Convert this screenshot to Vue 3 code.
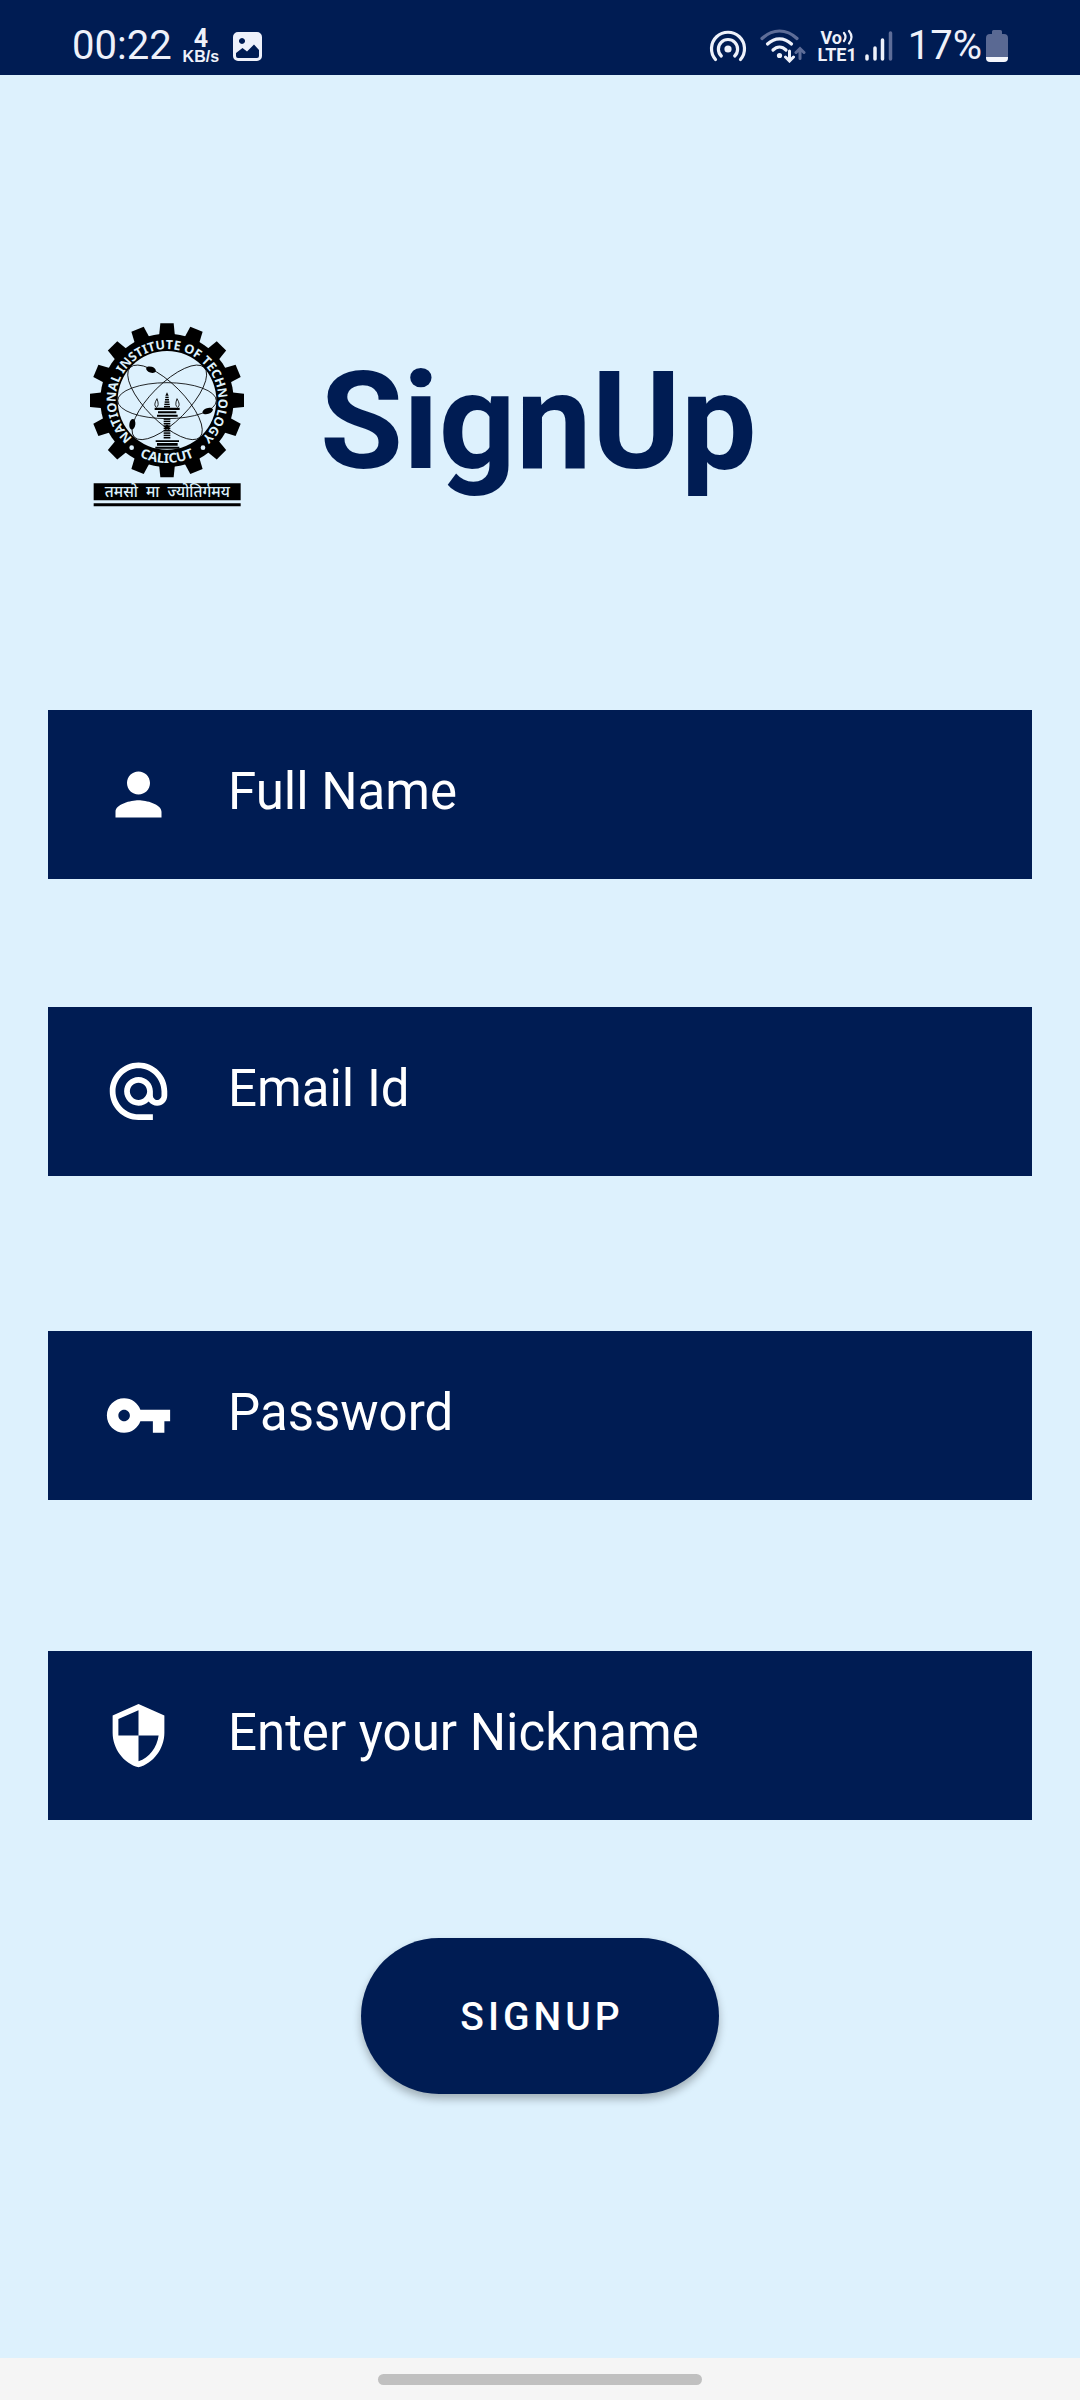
<script setup>
import { reactive } from 'vue'

const form = reactive({ name: '', email: '', password: '', nickname: '' })

const fields = [
  {
    id: 'name',
    label: 'Full Name',
    type: 'text',
    icon: 'M12 12c2.21 0 4-1.79 4-4s-1.79-4-4-4-4 1.79-4 4 1.79 4 4 4zm0 2c-2.67 0-8 1.34-8 4v2h16v-2c0-2.66-5.33-4-8-4z',
  },
  {
    id: 'email',
    label: 'Email Id',
    type: 'email',
    icon: 'M12 1.95c-5.52 0-10 4.48-10 10s4.48 10 10 10h5v-2h-5c-4.34 0-8-3.66-8-8s3.66-8 8-8 8 3.66 8 8v1.43c0 .79-.71 1.57-1.5 1.57s-1.5-.78-1.5-1.57v-1.43c0-2.76-2.24-5-5-5s-5 2.24-5 5 2.24 5 5 5c1.38 0 2.64-.56 3.54-1.47.65.89 1.77 1.47 2.96 1.47 1.97 0 3.5-1.6 3.5-3.57v-1.43c0-5.52-4.48-10-10-10zm0 13c-1.66 0-3-1.34-3-3s1.34-3 3-3 3 1.34 3 3-1.34 3-3 3z',
  },
  {
    id: 'password',
    label: 'Password',
    type: 'password',
    icon: 'M12.65 10C11.83 7.67 9.61 6 7 6c-3.31 0-6 2.69-6 6s2.69 6 6 6c2.61 0 4.83-1.67 5.65-4H17v4h4v-4h2v-4H12.65zM7 14c-1.1 0-2-.9-2-2s.9-2 2-2 2 .9 2 2-.9 2-2 2z',
  },
  {
    id: 'nickname',
    label: 'Enter your Nickname',
    type: 'text',
    icon: 'M12 1L3 5v6c0 5.55 3.84 10.74 9 12 5.16-1.26 9-6.45 9-12V5l-9-4zm0 10.99h7c-.53 4.12-3.28 7.79-7 8.94V12H5V6.3l7-3.11v8.8z',
  },
]

const teeth = Array.from({ length: 16 }, (_, i) => i * 22.5)
const spire = [289, 296, 303, 310, 317]
const column = [354, 361, 368, 375, 382, 389, 396, 403, 410]
</script>

<template>
  <div class="screen">
    <header class="status">
      <div class="status-side">
        <span class="clock">00:22</span>
        <span class="speed"><b class="speed-value">4</b><b class="speed-unit">KB/s</b></span>
        <svg class="icon-picture" viewBox="0 0 29 29" aria-hidden="true">
          <path fill="#eef1fa" fill-rule="evenodd" d="M5 0h19a5 5 0 0 1 5 5v19a5 5 0 0 1-5 5H5a5 5 0 0 1-5-5V5a5 5 0 0 1 5-5zM9 6a3 3 0 1 0 .01 0zM3 21v3a2 2 0 0 0 2 2h19a2 2 0 0 0 2-2v-6l-5-5.500-7 7-4.500-3.500z" />
        </svg>
      </div>
      <div class="status-side">
        <svg class="icon-hotspot" viewBox="0 0 38 34" fill="none" stroke="#eef1fa" stroke-width="3.200" stroke-linecap="round" aria-hidden="true">
          <path d="M6.500 30.500A16.500 16.500 0 1 1 31.500 30.500" />
          <path d="M12.300 27A9.600 9.600 0 1 1 25.700 27" />
          <circle cx="19" cy="20" r="3.600" fill="#eef1fa" stroke="none" />
        </svg>
        <svg class="icon-wifi" viewBox="0 0 46 34" fill="none" stroke="#eef1fa" stroke-width="3.200" stroke-linecap="round" aria-hidden="true">
          <path d="M2 9.500Q10 2 19.500 2T37 9.500" stroke="#5e6d98" />
          <path d="M7.500 15Q13 9.800 19.500 9.800T31.500 15" />
          <path d="M13 21Q16 18 19.500 18T26 21" />
          <circle cx="19.500" cy="26.500" r="2.600" fill="#eef1fa" stroke="none" />
          <path d="M29.500 22v9.500M25.500 28l4 4 4-4" stroke-width="3" />
          <path d="M40 29.500V20M36 23.500l4-4 4 4" stroke="#5e6d98" stroke-width="3" />
        </svg>
        <span class="volte">
          <span class="volte-top">Vo<svg class="volte-waves" viewBox="0 0 12 16" fill="none" stroke="#eef1fa" stroke-width="2.200" stroke-linecap="round" aria-hidden="true"><path d="M2 4Q5 8 2 12M7 2Q12 8 7 14.500" /></svg></span>
          <span>LTE1</span>
        </span>
        <svg class="icon-signal" viewBox="0 0 28 31" stroke="#eef1fa" stroke-width="3.500" stroke-linecap="round" aria-hidden="true">
          <path d="M2 25v3M10 17v11M17.500 9v19" />
          <path d="M25.500 2v26" stroke="#5e6d98" />
        </svg>
        <span class="percent">17%</span>
        <svg class="icon-battery" viewBox="0 0 22 32" aria-hidden="true">
          <path fill="#5a6993" d="M6 1.500Q6 0 7.500 0h7Q16 0 16 1.500V4h2q4 0 4 4v19H0V8q0-4 4-4h2z" />
          <path fill="#f4f6fc" d="M0 27h22v1q0 4-4 4H4q-4 0-4-4z" />
        </svg>
      </div>
    </header>

    <main class="content">
      <div class="brand">
        <svg class="logo" viewBox="58 68 471 552" role="img" aria-label="National Institute of Technology Calicut">
          <defs>
            <path id="ring-top" d="M292 454a154 154 0 1 1 1 0" />
            <path id="ring-bottom" d="M104 300a188 188 0 0 0 376 0" />
          </defs>
          <path v-for="a in teeth" :key="a" d="M272 69h40l4 40h-48z" :transform="`rotate(${a} 292 300)`" />
          <circle cx="292" cy="300" r="200" />
          <circle cx="292" cy="300" r="148" fill="#ddf1fd" />
          <g fill="none" stroke="#000" stroke-width="2.500">
            <ellipse cx="292" cy="301" rx="148" ry="54" />
            <ellipse cx="286" cy="306" rx="148" ry="56" transform="rotate(45 286 306)" />
            <ellipse cx="299" cy="306" rx="148" ry="56" transform="rotate(-45 299 306)" />
            <path d="M262 295q-12 20-2 26 10-4 2-26zM322 295q12 20 2 26-10-4-2-26z" />
          </g>
          <ellipse cx="244" cy="208" rx="15" ry="9" transform="rotate(18 244 208)" />
          <ellipse cx="414" cy="332" rx="16" ry="9" transform="rotate(-18 414 332)" />
          <ellipse cx="188" cy="372" rx="16" ry="9" transform="rotate(98 188 372)" />
          <path d="M292 276l5 10h-10z" />
          <rect v-for="(y, i) in spire" :key="y" :x="287 - i" :y="y" :width="10 + i * 2" height="4.500" />
          <path d="M255 322h75v7h-75zM265 333h55v6h-55zM262 343h62v6h-62zM258 420h70v5h-70zM262 428h62v8h-62zM257 439h72v6h-72z" />
          <rect v-for="y in column" :key="y" x="282" :y="y" width="20" height="4.500" />
          <path d="M284 380l8-8 8 8-8 8z" />
          <circle cx="186" cy="442" r="7" fill="#ddf1fd" />
          <circle cx="400" cy="442" r="7" fill="#ddf1fd" />
          <text class="ring-text" text-anchor="middle"><textPath href="#ring-top" startOffset="50%">NATIONAL INSTITUTE OF TECHNOLOGY</textPath></text>
          <text class="ring-text ring-place" text-anchor="middle"><textPath href="#ring-bottom" startOffset="50%">CALICUT</textPath></text>
          <path d="M72 549h441v51H72zM72 609h441v9H72z" />
          <text class="motto" x="293" y="589" text-anchor="middle">तमसो&nbsp; मा&nbsp; ज्योतिर्गमय</text>
        </svg>
        <h1 class="title">SignUp</h1>
      </div>

      <form class="form" @submit.prevent>
        <div v-for="f in fields" :key="f.id" class="field" :class="f.id">
          <label :for="f.id" :aria-label="f.label">
            <svg class="field-icon" viewBox="0 0 24 24" fill="#fff" aria-hidden="true"><path :d="f.icon" /></svg>
          </label>
          <input :id="f.id" v-model="form[f.id]" class="field-input" :type="f.type" :placeholder="f.label">
        </div>
        <button class="submit" type="submit">SIGNUP</button>
      </form>
    </main>

    <footer class="gesture"><div class="gesture-pill"></div></footer>
  </div>
</template>

<style>
body {
  margin: 0;
}
</style>

<style scoped>
.screen {
  display: flex;
  flex-direction: column;
  min-height: 100vh;
  background: #ddf1fd;
  font-family: Roboto, "Noto Sans", sans-serif;
}

.status {
  display: flex;
  justify-content: space-between;
  box-sizing: border-box;
  height: 75px;
  padding: 17px 72px 0;
  background: #001c53;
  color: #eef1fa;
}

.status-side {
  display: flex;
  align-items: center;
  height: 58px;
}

.clock,
.percent {
  font-size: 40px;
  line-height: 58px;
}

.speed {
  display: flex;
  flex-direction: column;
  align-items: center;
  margin-left: 11px;
  font-family: "Liberation Sans", sans-serif;
}

.speed-value {
  font-family: Roboto, sans-serif;
  font-size: 25px;
  line-height: 21px;
}

.speed-unit {
  font-size: 16px;
  line-height: 16px;
}

.icon-picture {
  width: 29px;
  height: 29px;
  margin-left: 14px;
}

.icon-hotspot {
  width: 38px;
  height: 34px;
}

.icon-wifi {
  width: 46px;
  height: 34px;
  margin-left: 13px;
}

.volte {
  display: flex;
  flex-direction: column;
  margin-left: 11px;
  font-size: 18px;
  font-weight: 700;
  line-height: 17px;
}

.volte-top {
  display: flex;
  padding-left: 3px;
}

.volte-waves {
  width: 12px;
  height: 16px;
}

.icon-signal {
  width: 28px;
  height: 31px;
  margin-left: 8px;
}

.percent {
  margin-left: 15px;
}

.icon-battery {
  width: 22px;
  height: 32px;
  margin-left: 4px;
}

.content {
  flex: 1;
  padding: 248px 48px 0;
}

.brand {
  display: flex;
  align-items: center;
  gap: 74px;
  padding-left: 41px;
}

.logo {
  width: 157px;
  height: 184px;
}

.ring-text {
  fill: #ddf1fd;
  font-family: "Noto Sans", sans-serif;
  font-size: 38px;
  font-weight: 700;
}

.ring-place {
  font-size: 40px;
}

.motto {
  fill: #ddf1fd;
  font-family: "Noto Sans", "Noto Sans Devanagari", sans-serif;
  font-size: 46px;
  font-weight: 500;
}

.title {
  margin: 0;
  padding-top: 14px;
  color: #001c53;
  font-size: 135px;
  font-weight: 700;
  line-height: 160px;
}

.form {
  display: flex;
  flex-direction: column;
  margin-top: 203px;
}

.field {
  display: flex;
  align-items: center;
  gap: 55px;
  box-sizing: border-box;
  height: 169px;
  padding: 0 56px;
  background: #001c53;
}

.email {
  margin-top: 128px;
}

.password {
  margin-top: 155px;
}

.nickname {
  margin-top: 151px;
}

.field-icon {
  display: block;
  width: 69px;
  height: 69px;
}

.field-input {
  flex: 1;
  min-width: 0;
  padding: 0 0 6px;
  border: 0;
  outline: 0;
  background: transparent;
  color: #fff;
  font-family: inherit;
  font-size: 51px;
  line-height: 60px;
}

.field-input::placeholder {
  color: #fff;
  opacity: 1;
}

.submit {
  align-self: center;
  margin-top: 118px;
  padding: 2px 95px 0;
  border: 0;
  border-radius: 78px;
  background: #001c53;
  box-shadow: 0 5px 8px rgba(0, 0, 0, 0.28);
  color: #fff;
  font-family: inherit;
  font-size: 39px;
  font-weight: 500;
  letter-spacing: 4px;
  line-height: 154px;
  text-indent: 4px;
}

.gesture {
  display: flex;
  justify-content: center;
  align-items: center;
  height: 42px;
  background: #f5f5f5;
}

.gesture-pill {
  width: 30%;
  height: 11px;
  border-radius: 6px;
  background: #c0c0c0;
}
</style>
